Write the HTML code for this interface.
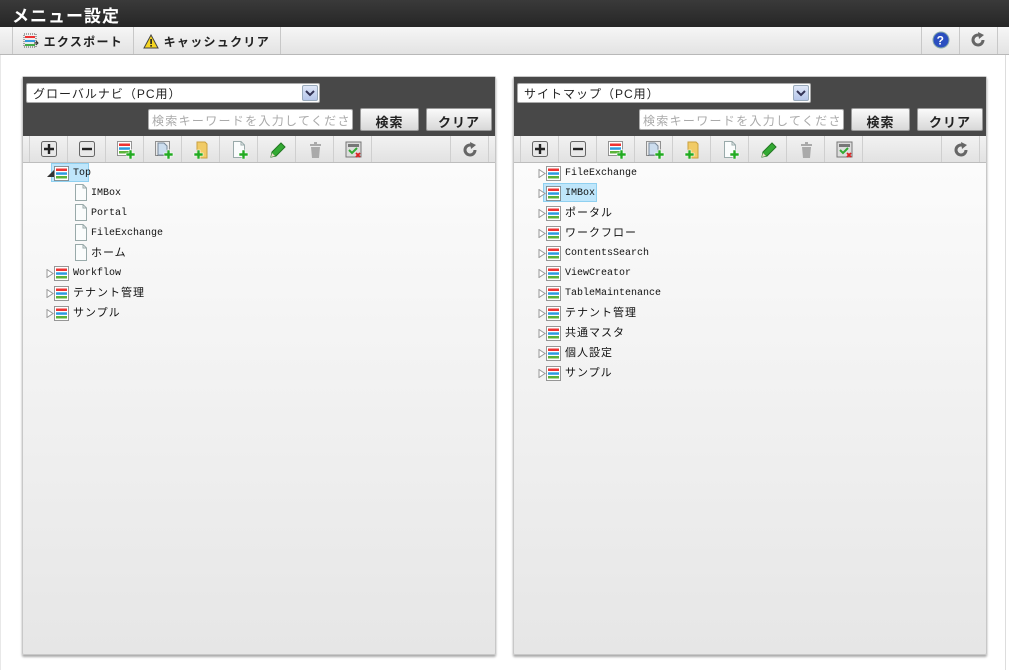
<!DOCTYPE html>
<html><head><meta charset="utf-8"><style>
*{margin:0;padding:0;box-sizing:border-box}
body{width:1009px;height:670px;background:#fff;position:relative;overflow:hidden;font-family:"Liberation Sans","Noto Sans CJK JP",sans-serif}
.abs{position:absolute}
#title{left:0;top:0;width:1009px;height:27px;background:linear-gradient(#3a3a3a,#262626);color:#fff;font-weight:bold;font-size:17px;padding:2px 0 0 12px;letter-spacing:1px}
#tb{left:0;top:27px;width:1009px;height:28px;background:linear-gradient(#f6f6f6,#e3e3e3);border-bottom:1px solid #b8b8b8}
.tbc{position:absolute;top:0;height:27px;border-left:1px solid #c8c8c8;border-right:1px solid #c8c8c8;font-size:12px;font-weight:bold;color:#222;padding-top:6px;letter-spacing:1.3px}
#pageborder{left:1005px;top:55px;width:1px;height:615px;background:#ddd}
#pageborderL{left:0;top:55px;width:1px;height:615px;background:#e8e8e8}
.panel{position:absolute;top:76px;width:474px;height:579px;background:linear-gradient(#fff,#fafafa 20%,#e6e6e6);border:1px solid #c8c8c8;border-radius:2px;box-shadow:0 2px 2px #aaa}
.hd{position:absolute;left:0;top:0;width:472px;height:59px;background:#484848}
.sel{position:absolute;left:3px;top:6px;width:294px;height:20px;background:#fff;border:1px solid #aaa;border-radius:2px;font-size:12px;padding:1px 0 0 6px;letter-spacing:1px;color:#222}
.sel .ar{position:absolute;right:1px;top:1px;width:16px;height:16px;background:linear-gradient(#dfe7f8,#b6c6ea);border:1px solid #9ab;border-radius:2px}
.inp{position:absolute;left:125px;top:32px;width:205px;height:21px;background:#fff;border:1px solid #aaa;border-radius:2px;font-size:12px;color:#aaa;padding:2px 0 0 3px;white-space:nowrap;overflow:hidden;letter-spacing:1.3px}
.btn{position:absolute;top:31px;height:23px;background:linear-gradient(#fafafa,#d8d8d8);border:1px solid #999;border-radius:2px;font-size:13px;font-weight:bold;text-align:center;padding-top:3px;color:#222;letter-spacing:1px}
.tool{position:absolute;left:0;top:59px;width:472px;height:27px;background:linear-gradient(#f2f2f2,#e2e2e2);border-bottom:1px solid #bdbdbd}
.cell{position:absolute;top:0;width:38px;height:26px;border-right:1px solid #cfcfcf}
.cell svg{position:absolute;left:11px;top:5px}
.row{position:absolute;height:20px;font-family:"Liberation Mono","Noto Sans CJK JP",monospace;font-size:10px;color:#111;white-space:nowrap;line-height:22px}
.row .j{font-size:11px;letter-spacing:1px}
.tri{position:absolute;top:7px}
.hl{position:absolute;background:#bfe6fb;border:1px solid #8fd0f0;height:19px}
</style></head><body>
<div id="title" class="abs">メニュー設定</div>
<div id="tb" class="abs">
 <div class="tbc" style="left:12px;width:122px;padding-left:10px">
  <svg width="16" height="16" style="vertical-align:-3px"><rect x="1" y="1" width="12" height="13" fill="none" stroke="#555" stroke-dasharray="1 1"/><rect x="2" y="3" width="10" height="2" fill="#e33"/><rect x="2" y="7" width="10" height="2" fill="#39d"/><rect x="2" y="11" width="10" height="2" fill="#4a4"/><path d="M11 10h4m-2-2l2 2-2 2" stroke="#333" fill="none"/></svg>
  エクスポート</div>
 <div class="tbc" style="left:133px;width:148px;padding-left:10px;border-left:none">
  <svg width="16" height="15" style="vertical-align:-3px"><path d="M8 1L15 14H1Z" fill="#f6d520" stroke="#444"/><rect x="7.3" y="5" width="1.6" height="5" fill="#222"/><rect x="7.3" y="11" width="1.6" height="1.6" fill="#222"/></svg>
  キャッシュクリア</div>
 <div class="tbc" style="left:921px;width:39px">
  <svg width="18" height="18" style="position:absolute;left:10px;top:4px"><circle cx="9" cy="9" r="8" fill="#2b4fc0" stroke="#8aa"/><text x="9" y="13.5" font-size="12" font-weight="bold" fill="#fff" text-anchor="middle" font-family="Liberation Sans">?</text></svg></div>
 <div class="tbc" style="left:959px;width:39px;border-left:none">
  <svg width="16" height="16" style="position:absolute;left:11px;top:5px"><path d="M13 8A5 5 0 1 1 9.5 3.2" fill="none" stroke="#666" stroke-width="3"/><path d="M8 0L14 3 9 7Z" fill="#666"/></svg></div>
</div>
<div id="pageborder" class="abs"></div><div id="pageborderL" class="abs"></div>

<svg width="0" height="0" style="position:absolute">
 <defs>
  <g id="mi"><rect x="0.5" y="0.5" width="14" height="14" fill="#fff" stroke="#333" stroke-dasharray="1 1"/><rect x="2" y="2.5" width="11" height="2.5" fill="#e33"/><rect x="2" y="6.3" width="11" height="2.5" fill="#2d9be0"/><rect x="2" y="10" width="11" height="2.5" fill="#5bb33a"/></g>
  <g id="fi"><path d="M1.5 0.5H9L12.5 4V16.5H1.5Z" fill="#fafcfc" stroke="#9aa"/><path d="M9 0.5V4H12.5" fill="none" stroke="#9aa"/></g>
  <g id="plus"><path d="M0 3h3v-3h3v3h3v3h-3v3h-3v-3h-3z" fill="#2a2" stroke="#fff" stroke-width=".6"/></g>
 </defs>
</svg>

<!-- LEFT PANEL -->
<div class="panel" style="left:22px">
 <div class="hd">
  <div class="sel">グローバルナビ（PC用）<div class="ar"><svg width="14" height="14"><path d="M3 5l4 4 4-4" stroke="#335" stroke-width="2" fill="none"/></svg></div></div>
  <div class="inp">検索キーワードを入力してください</div>
  <div class="btn" style="left:337px;width:59px">検索</div>
  <div class="btn" style="left:403px;width:66px">クリア</div>
 </div>
 <div class="tool">
  <div class="cell" style="left:0;width:7px"></div>
  <div class="cell" style="left:7px"><svg width="17" height="17"><rect x=".5" y=".5" width="15" height="15" rx="2" fill="#e8e8e8" stroke="#666"/><path d="M3 8h10M8 3v10" stroke="#222" stroke-width="2.4"/></svg></div>
  <div class="cell" style="left:45px"><svg width="17" height="17"><rect x=".5" y=".5" width="15" height="15" rx="2" fill="#e8e8e8" stroke="#666"/><path d="M3 8h10" stroke="#222" stroke-width="2.4"/></svg></div>
  <div class="cell" style="left:83px"><svg width="19" height="18"><use href="#mi"/><use href="#plus" x="9" y="9"/></svg></div>
  <div class="cell" style="left:121px"><svg width="19" height="18"><rect x=".5" y=".5" width="14" height="14" fill="none" stroke="#333" stroke-dasharray="1 1"/><path d="M3 2h6l3 3v9H3z" fill="#cde" stroke="#789"/><use href="#plus" x="9" y="9"/></svg></div>
  <div class="cell" style="left:159px"><svg width="19" height="18"><path d="M4 1h8l2 2v14H4z" fill="#f1cb66" stroke="#c9a040"/><use href="#plus" x="1" y="9"/></svg></div>
  <div class="cell" style="left:197px"><svg width="19" height="18"><use href="#fi" x="1"/><use href="#plus" x="8" y="9"/></svg></div>
  <div class="cell" style="left:235px"><svg width="19" height="18"><path d="M2 16l1-5 9-9 4 4-9 9z" fill="#3a3" stroke="#272"/><path d="M2 16l1-4 3 3z" fill="#edc"/></svg></div>
  <div class="cell" style="left:273px"><svg width="19" height="18"><rect x="3" y="3" width="11" height="2" fill="#aaa"/><rect x="7" y="1" width="3" height="2" fill="#aaa"/><path d="M4 6h9l-1 11H5z" fill="#aaa"/></svg></div>
  <div class="cell" style="left:311px"><svg width="19" height="18"><rect x="1" y="1" width="15" height="15" fill="#ddd" stroke="#777"/><rect x="3" y="3" width="11" height="3" fill="#777"/><path d="M4 9l3 3 5-5" stroke="#3a3" stroke-width="2" fill="none"/><path d="M11 12l4 4m0-4l-4 4" stroke="#d22" stroke-width="1.8"/></svg></div>
  <div class="cell" style="left:349px;width:79px;border-right:1px solid #cfcfcf"></div>
  <div class="cell" style="left:428px"><svg width="17" height="17"><path d="M13 9A5 5 0 1 1 9.5 4.2" fill="none" stroke="#666" stroke-width="3"/><path d="M8 1L14 4 9 8Z" fill="#666"/></svg></div>
 </div>
 <div class="hl" style="left:28px;top:86px;width:38px"></div>
 <div class="row" style="left:24px;top:86px"><svg class="tri" width="7" height="7"><path d="M7 0V7H0Z" fill="#333"/></svg></div>
 <svg class="abs" style="left:31px;top:89px" width="15" height="15"><use href="#mi"/></svg>
 <div class="row" style="left:50px;top:86px">Top</div>
 <svg class="abs" style="left:51px;top:107px" width="14" height="18"><use href="#fi"/></svg><div class="row" style="left:68px;top:106px">IMBox</div>
 <svg class="abs" style="left:51px;top:127px" width="14" height="18"><use href="#fi"/></svg><div class="row" style="left:68px;top:126px">Portal</div>
 <svg class="abs" style="left:51px;top:147px" width="14" height="18"><use href="#fi"/></svg><div class="row" style="left:68px;top:146px">FileExchange</div>
 <svg class="abs" style="left:51px;top:167px" width="14" height="18"><use href="#fi"/></svg><div class="row" style="left:68px;top:166px"><span class="j">ホーム</span></div>
 <svg class="abs" style="left:23px;top:192px" width="8" height="9"><path d="M1 .5L7 4.5 1 8.5Z" fill="#fff" stroke="#999"/></svg><svg class="abs" style="left:31px;top:189px" width="15" height="15"><use href="#mi"/></svg><div class="row" style="left:50px;top:186px">Workflow</div>
 <svg class="abs" style="left:23px;top:212px" width="8" height="9"><path d="M1 .5L7 4.5 1 8.5Z" fill="#fff" stroke="#999"/></svg><svg class="abs" style="left:31px;top:209px" width="15" height="15"><use href="#mi"/></svg><div class="row" style="left:50px;top:206px"><span class="j">テナント管理</span></div>
 <svg class="abs" style="left:23px;top:232px" width="8" height="9"><path d="M1 .5L7 4.5 1 8.5Z" fill="#fff" stroke="#999"/></svg><svg class="abs" style="left:31px;top:229px" width="15" height="15"><use href="#mi"/></svg><div class="row" style="left:50px;top:226px"><span class="j">サンプル</span></div>
</div>

<!-- RIGHT PANEL -->
<div class="panel" style="left:513px">
 <div class="hd">
  <div class="sel">サイトマップ（PC用）<div class="ar"><svg width="14" height="14"><path d="M3 5l4 4 4-4" stroke="#335" stroke-width="2" fill="none"/></svg></div></div>
  <div class="inp">検索キーワードを入力してください</div>
  <div class="btn" style="left:337px;width:59px">検索</div>
  <div class="btn" style="left:403px;width:66px">クリア</div>
 </div>
 <div class="tool">
  <div class="cell" style="left:0;width:7px"></div>
  <div class="cell" style="left:7px"><svg width="17" height="17"><rect x=".5" y=".5" width="15" height="15" rx="2" fill="#e8e8e8" stroke="#666"/><path d="M3 8h10M8 3v10" stroke="#222" stroke-width="2.4"/></svg></div>
  <div class="cell" style="left:45px"><svg width="17" height="17"><rect x=".5" y=".5" width="15" height="15" rx="2" fill="#e8e8e8" stroke="#666"/><path d="M3 8h10" stroke="#222" stroke-width="2.4"/></svg></div>
  <div class="cell" style="left:83px"><svg width="19" height="18"><use href="#mi"/><use href="#plus" x="9" y="9"/></svg></div>
  <div class="cell" style="left:121px"><svg width="19" height="18"><rect x=".5" y=".5" width="14" height="14" fill="none" stroke="#333" stroke-dasharray="1 1"/><path d="M3 2h6l3 3v9H3z" fill="#cde" stroke="#789"/><use href="#plus" x="9" y="9"/></svg></div>
  <div class="cell" style="left:159px"><svg width="19" height="18"><path d="M4 1h8l2 2v14H4z" fill="#f1cb66" stroke="#c9a040"/><use href="#plus" x="1" y="9"/></svg></div>
  <div class="cell" style="left:197px"><svg width="19" height="18"><use href="#fi" x="1"/><use href="#plus" x="8" y="9"/></svg></div>
  <div class="cell" style="left:235px"><svg width="19" height="18"><path d="M2 16l1-5 9-9 4 4-9 9z" fill="#3a3" stroke="#272"/><path d="M2 16l1-4 3 3z" fill="#edc"/></svg></div>
  <div class="cell" style="left:273px"><svg width="19" height="18"><rect x="3" y="3" width="11" height="2" fill="#aaa"/><rect x="7" y="1" width="3" height="2" fill="#aaa"/><path d="M4 6h9l-1 11H5z" fill="#aaa"/></svg></div>
  <div class="cell" style="left:311px"><svg width="19" height="18"><rect x="1" y="1" width="15" height="15" fill="#ddd" stroke="#777"/><rect x="3" y="3" width="11" height="3" fill="#777"/><path d="M4 9l3 3 5-5" stroke="#3a3" stroke-width="2" fill="none"/><path d="M11 12l4 4m0-4l-4 4" stroke="#d22" stroke-width="1.8"/></svg></div>
  <div class="cell" style="left:349px;width:79px"></div>
  <div class="cell" style="left:428px"><svg width="17" height="17"><path d="M13 9A5 5 0 1 1 9.5 4.2" fill="none" stroke="#666" stroke-width="3"/><path d="M8 1L14 4 9 8Z" fill="#666"/></svg></div>
 </div>
 <div class="hl" style="left:29px;top:106px;width:54px"></div>
 <svg class="abs" style="left:24px;top:92px" width="8" height="9"><path d="M1 .5L7 4.5 1 8.5Z" fill="#fff" stroke="#999"/></svg><svg class="abs" style="left:32px;top:89px" width="15" height="15"><use href="#mi"/></svg><div class="row" style="left:51px;top:86px">FileExchange</div>
 <svg class="abs" style="left:24px;top:112px" width="8" height="9"><path d="M1 .5L7 4.5 1 8.5Z" fill="#fff" stroke="#999"/></svg><svg class="abs" style="left:32px;top:109px" width="15" height="15"><use href="#mi"/></svg><div class="row" style="left:51px;top:106px">IMBox</div>
 <svg class="abs" style="left:24px;top:132px" width="8" height="9"><path d="M1 .5L7 4.5 1 8.5Z" fill="#fff" stroke="#999"/></svg><svg class="abs" style="left:32px;top:129px" width="15" height="15"><use href="#mi"/></svg><div class="row" style="left:51px;top:126px"><span class="j">ポータル</span></div>
 <svg class="abs" style="left:24px;top:152px" width="8" height="9"><path d="M1 .5L7 4.5 1 8.5Z" fill="#fff" stroke="#999"/></svg><svg class="abs" style="left:32px;top:149px" width="15" height="15"><use href="#mi"/></svg><div class="row" style="left:51px;top:146px"><span class="j">ワークフロー</span></div>
 <svg class="abs" style="left:24px;top:172px" width="8" height="9"><path d="M1 .5L7 4.5 1 8.5Z" fill="#fff" stroke="#999"/></svg><svg class="abs" style="left:32px;top:169px" width="15" height="15"><use href="#mi"/></svg><div class="row" style="left:51px;top:166px">ContentsSearch</div>
 <svg class="abs" style="left:24px;top:192px" width="8" height="9"><path d="M1 .5L7 4.5 1 8.5Z" fill="#fff" stroke="#999"/></svg><svg class="abs" style="left:32px;top:189px" width="15" height="15"><use href="#mi"/></svg><div class="row" style="left:51px;top:186px">ViewCreator</div>
 <svg class="abs" style="left:24px;top:212px" width="8" height="9"><path d="M1 .5L7 4.5 1 8.5Z" fill="#fff" stroke="#999"/></svg><svg class="abs" style="left:32px;top:209px" width="15" height="15"><use href="#mi"/></svg><div class="row" style="left:51px;top:206px">TableMaintenance</div>
 <svg class="abs" style="left:24px;top:232px" width="8" height="9"><path d="M1 .5L7 4.5 1 8.5Z" fill="#fff" stroke="#999"/></svg><svg class="abs" style="left:32px;top:229px" width="15" height="15"><use href="#mi"/></svg><div class="row" style="left:51px;top:226px"><span class="j">テナント管理</span></div>
 <svg class="abs" style="left:24px;top:252px" width="8" height="9"><path d="M1 .5L7 4.5 1 8.5Z" fill="#fff" stroke="#999"/></svg><svg class="abs" style="left:32px;top:249px" width="15" height="15"><use href="#mi"/></svg><div class="row" style="left:51px;top:246px"><span class="j">共通マスタ</span></div>
 <svg class="abs" style="left:24px;top:272px" width="8" height="9"><path d="M1 .5L7 4.5 1 8.5Z" fill="#fff" stroke="#999"/></svg><svg class="abs" style="left:32px;top:269px" width="15" height="15"><use href="#mi"/></svg><div class="row" style="left:51px;top:266px"><span class="j">個人設定</span></div>
 <svg class="abs" style="left:24px;top:292px" width="8" height="9"><path d="M1 .5L7 4.5 1 8.5Z" fill="#fff" stroke="#999"/></svg><svg class="abs" style="left:32px;top:289px" width="15" height="15"><use href="#mi"/></svg><div class="row" style="left:51px;top:286px"><span class="j">サンプル</span></div>
</div>
</body></html>
